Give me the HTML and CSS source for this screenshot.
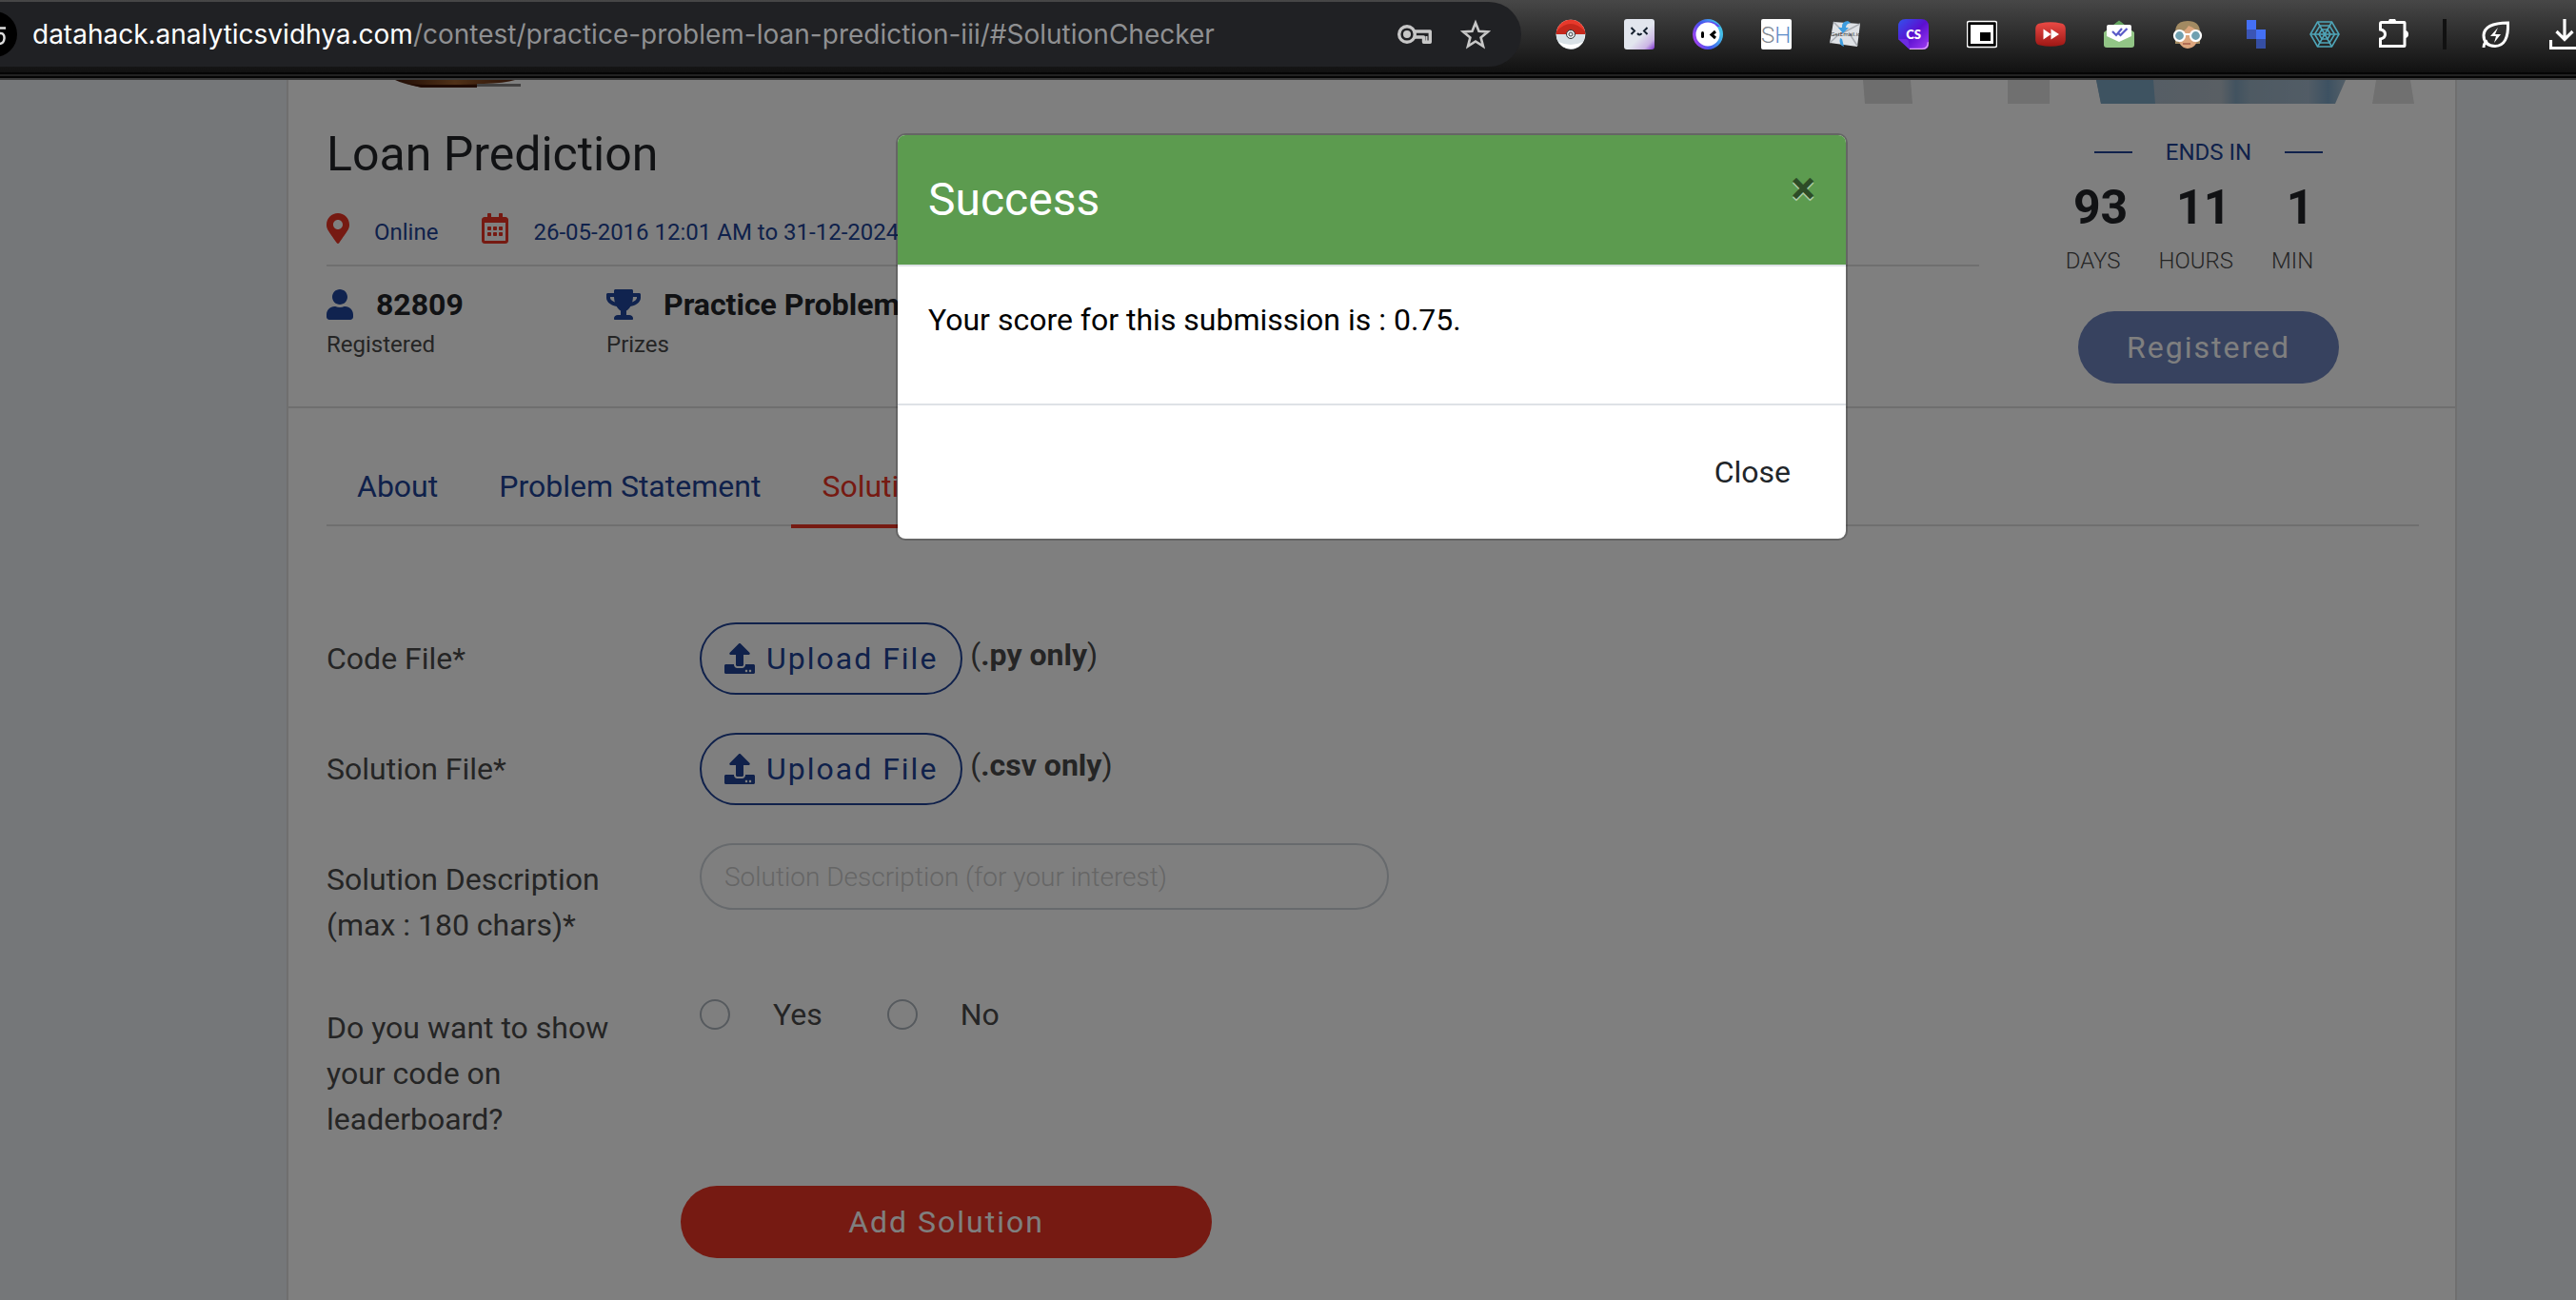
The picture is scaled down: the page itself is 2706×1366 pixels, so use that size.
FILE: index.html
```html
<!DOCTYPE html>
<html lang="en">
<head>
<meta charset="utf-8">
<title>Loan Prediction</title>
<link rel="stylesheet" href="styles.css">
</head>
<body>
<svg class="sprite" aria-hidden="true">
  <symbol id="i-upload" viewBox="0 0 512 512"><path d="M296 384h-80c-13.3 0-24-10.7-24-24V192h-87.7c-17.8 0-26.7-21.5-14.1-34.1L242.3 5.7c7.5-7.5 19.8-7.5 27.3 0l152.2 152.2c12.6 12.6 3.7 34.1-14.1 34.1H320v168c0 13.3-10.7 24-24 24zm216-8v112c0 13.3-10.7 24-24 24H24c-13.3 0-24-10.7-24-24V376c0-13.3 10.7-24 24-24h136v8c0 30.9 25.1 56 56 56h80c30.9 0 56-25.1 56-56v-8h136c13.3 0 24 10.7 24 24zm-124 88c0-11-9-20-20-20s-20 9-20 20 9 20 20 20 20-9 20-20zm64 0c0-11-9-20-20-20s-20 9-20 20 9 20 20 20 20-9 20-20z"/></symbol>
</svg>

<div class="toolbar">
  <div class="omnibox">
    <span class="site-badge"><svg width="18" height="48" viewBox="0 0 18 48"><path d="M-30 24a24 24 0 0 1 48 0a24 24 0 0 1-48 0z" fill="#000"/><path d="M6 17.5H-2M-2 23h3c5 0 5 11-2 11" fill="none" stroke="#ddd" stroke-width="2.500"/></svg></span>
    <span class="url"><b>datahack.analyticsvidhya.com</b>/contest/practice-problem-loan-prediction-iii/#SolutionChecker</span>
    <svg class="omni-icon" width="36" height="20" viewBox="0 0 36 20"><circle cx="10" cy="10" r="8.300" fill="none" stroke="#c7c7c7" stroke-width="3.400"/><circle cx="10" cy="10" r="4" fill="#c7c7c7"/><path d="M17.500 7H34.300V18.300H27.500V13H17.500" fill="none" stroke="#c7c7c7" stroke-width="3.400" stroke-linejoin="round"/><path d="M30.500 12v5" stroke="#c7c7c7" stroke-width="2"/></svg>
    <svg class="omni-icon" width="32" height="32" viewBox="0 0 32 32"><path d="M16 4l3.500 8.800 9.300.6-7.200 6 2.400 9.300L16 23.500l-8 5.200 2.400-9.300-7.200-6 9.300-.6z" fill="none" stroke="#c7c7c7" stroke-width="2.600"/></svg>
  </div>
  <div class="extensions">
    <svg width="32" height="32" viewBox="0 0 32 32"><circle cx="16" cy="16" r="15.300" fill="#fff"/><path d="M.7 16a15.300 15.300 0 0 0 28 9q2-4 2-9z" fill="#d8e1e6"/><path d="M3 24a15.300 15.300 0 0 0 26 0q-13 6-26 0z" fill="#fff"/><path d="M.7 16a15.300 15.300 0 0 1 30.600 0z" fill="#e8392b"/><path d="M1 16V13Q16-3 31 13v3z" fill="#c5281c"/><circle cx="16" cy="16" r="4.500" fill="#e8eef0" stroke="#333" stroke-width="1"/><circle cx="16" cy="16" r="2" fill="none" stroke="#444" stroke-width="1"/></svg>
    <svg width="32" height="32" viewBox="0 0 32 32"><defs><linearGradient id="lav" x1="0" y1="0" x2="1" y2="1"><stop offset=".55" stop-color="#e2e6ee"/><stop offset=".82" stop-color="#cbb5e4"/><stop offset="1" stop-color="#7c2fd0"/></linearGradient></defs><rect width="32" height="32" rx="3" fill="url(#lav)"/><path d="M7.500 9l3.500 3.500L7.500 16M24.500 9L21 12.500l3.500 3.500M14 15q2.500 3 4.500 0" fill="none" stroke="#14202e" stroke-width="2"/></svg>
    <svg width="32" height="32" viewBox="0 0 32 32"><defs><linearGradient id="ring" x1="0" y1="1" x2="1" y2=".6"><stop offset="0" stop-color="#c63cf0"/><stop offset=".5" stop-color="#4353ee"/><stop offset="1" stop-color="#43bfe8"/></linearGradient></defs><circle cx="16" cy="16" r="16" fill="url(#ring)"/><path d="M5 8A16 16 0 0 1 29 8z" fill="#5948ef"/><circle cx="16" cy="16" r="12.500" fill="#fff"/><rect x="9" y="13" width="3" height="7" rx="1.500"/><path d="M24 13l-4 3.500 4 3.500" fill="none" stroke="#000" stroke-width="3"/></svg>
    <svg width="32" height="32" viewBox="0 0 32 32"><rect width="32" height="32" rx="2" fill="#fff"/><text x="0" y="25" class="sh"><tspan fill="#808891">S</tspan><tspan fill="#5b8bc8">H</tspan></text></svg>
    <svg width="32" height="32" viewBox="0 0 32 32"><path d="M4 3l28 2-3 24-29-4z" fill="#dfe2e6"/><path d="M4 3l11 11L32 5M0 25l11-10M29 28l-9-14" fill="none" stroke="#a9adb3" stroke-width="1.500"/><path d="M19 2q-7 1-6 7H9l5 6 6-6h-3q0-4 5-5zM11 20q-2 7 4 9l-2-8z" fill="#3d9de0"/><text x="1" y="18" class="mail-name">GetEmail.io</text></svg>
    <svg width="32" height="32" viewBox="0 0 32 32"><defs><linearGradient id="cs" x1="0" y1="0" x2="1" y2="1"><stop offset="0" stop-color="#3252ec"/><stop offset=".5" stop-color="#5b0fd0"/><stop offset="1" stop-color="#a23ff5"/></linearGradient></defs><path d="M8 0h16q8 0 8 8v18q0 6-6 6H12L0 21V8Q0 0 8 0z" fill="url(#cs)"/><path d="M0 21h8q3 0 3 4l1 7z" fill="#6c2be2"/><path d="M12 31.300h13q6.300 0 6.300-7" fill="none" stroke="#e3a7f5" stroke-width="1.200"/><text x="16" y="21" class="cs">CS</text></svg>
    <svg width="32" height="32" viewBox="0 0 32 32"><rect x=".5" y="2.500" width="31" height="27" rx="2" fill="#000" stroke="#fff" stroke-width="1.500"/><rect x="4" y="6" width="24" height="20" fill="#fff"/><rect x="14" y="14" width="11" height="9"/></svg>
    <svg width="32" height="32" viewBox="0 0 32 32"><defs><linearGradient id="red" x1="0" y1="0" x2="0" y2="1"><stop offset="0" stop-color="#ea4a45"/><stop offset="1" stop-color="#9e1714"/></linearGradient></defs><path d="M5 4.500Q16 2 27 4.500 31.500 5 31.800 10v12q-.3 5-4.800 5.500-11 2.500-22 0Q.5 27 .2 22V10Q.5 5 5 4.500z" fill="url(#red)"/><path d="M8.500 10.500l8 5.500-8 5.500zM16.500 10.500l8.500 5.500-8.500 5.500z" fill="#fff"/></svg>
    <svg width="32" height="32" viewBox="0 0 32 32"><path d="M0 14L16 2l16 12v13q0 3-3 3H3q-3 0-3-3z" fill="#92c586"/><path d="M9 7l7-5.500L23 7z" fill="#64a55f"/><path d="M3 8q0-2 2-2h22q2 0 2 2v10l-13 6L3 18z" fill="#fff"/><path d="M9 13l4 4 6-7M14.500 14.500l3 2.500 7-7" fill="none" stroke="#5a5bc8" stroke-width="2.200"/></svg>
    <svg width="32" height="32" viewBox="0 0 32 32"><path d="M3 26V14Q3 2 16 2t13 12v12z" fill="#a28a62"/><path d="M5 15q8-1 12-8 9 3 10 9 0 14-11 15Q6 30 5 15z" fill="#dba57d"/><path d="M11 26h8" stroke="#a55d4a" stroke-width="1.500"/><circle cx="7.500" cy="17.500" r="5.500" fill="#6fa0b0" stroke="#fff" stroke-width="2.200"/><circle cx="24.500" cy="17.500" r="5.500" fill="#6fa0b0" stroke="#fff" stroke-width="2.200"/><path d="M12 16h8" stroke="#fff" stroke-width="2"/></svg>
    <svg width="32" height="32" viewBox="0 0 32 32"><path d="M6 1h10v10H6z" fill="#4470f5"/><path d="M16 11h10v10H16z" fill="#4470f5"/><path d="M6 11h10v10H6z" fill="#3b55b5"/><path d="M16 21h10v10H16z" fill="#354ea3"/></svg>
    <svg width="32" height="32" viewBox="0 0 32 32"><g fill="none" stroke="#4fa5b8" stroke-width="1.600"><path d="M8.500 3h15L31 16l-7.500 13h-15L1 16z"/><path d="M11 7h10l5.500 9L21 25H11l-5.500-9z"/><path d="M13 11h6l3 5-3 5h-6l-3-5z"/><path d="M8.500 3l15 26M23.500 3l-15 26M1 16h30"/></g></svg>
    <svg width="32" height="32" viewBox="0 0 32 32"><path d="M4 3.500h23.500q.5 0 .5.500v24q0 .5-.5.500H2.500V21q5-1 5-5t-5-5V5q0-1.500 1.500-1.500z" fill="none" stroke="#fff" stroke-width="3"/><path d="M11 3a4 4 0 0 1 8 0zM28 12a4 4 0 0 1 0 8z" fill="#fff"/></svg>
    <span class="divider"></span>
    <svg width="32" height="32" viewBox="0 0 32 32"><path d="M28.500 4Q29.500 28 15 28.500 3 28 3 17 4 4 28.500 4zM3 30q0-5 4-7" fill="none" stroke="#fff" stroke-width="3"/><path d="M18 9l-8 9h6l-2 7 7-9h-6z" fill="#fff"/></svg>
    <svg width="32" height="32" viewBox="0 0 32 32"><path d="M16 0v20M7.500 13l8.500 8.500L24.500 13M1.500 22v8.500h29V22" fill="none" stroke="#fff" stroke-width="3.200"/></svg>
  </div>
</div>

<div class="page">
  <main class="card">
    <div class="banner">
      <svg width="132" height="26" viewBox="0 0 132 26"><defs><linearGradient id="wood" x1="0" x2="1"><stop offset="0" stop-color="#40180a"/><stop offset=".5" stop-color="#a0622f"/><stop offset="1" stop-color="#5a2610"/></linearGradient></defs><path d="M0 0h126q-12 4-40 4v4H28Q8 4 0 0z" fill="url(#wood)"/><path d="M12 4q16 2 100 0L86 5v3H28z" fill="#401607"/><path d="M86 7h46V4H86z" fill="#858282"/></svg>
      <svg width="584" height="26" viewBox="0 0 584 26"><defs><linearGradient id="sky" x1="0" x2="1"><stop offset="0" stop-color="#a4b9cc"/><stop offset=".5" stop-color="#b3bec8"/><stop offset=".56" stop-color="#84a6c0"/><stop offset=".62" stop-color="#9db4c6"/><stop offset=".85" stop-color="#a4b9cc"/><stop offset=".93" stop-color="#7ba3c4"/><stop offset="1" stop-color="#a9bfd0"/></linearGradient></defs><path d="M2 0h50l2 25H4z" fill="#dcdcdc"/><path d="M154 0h44v25h-44zM541 0h36l4 25h-44z" fill="#e0e0e0"/><path d="M247 0h262l-11 25H252z" fill="url(#sky)"/><path d="M247 0h60l2 25h-57z" fill="#7da6c2"/></svg>
    </div>
    <header class="contest">
      <div class="summary">
        <h1>Loan Prediction</h1>
        <div class="meta">
          <span class="meta-item"><svg class="red" width="24" height="32" viewBox="0 0 384 512"><path d="M172.268 501.670C26.970 291.031 0 269.413 0 192 0 85.961 85.961 0 192 0s192 85.961 192 192c0 77.413-26.970 99.031-172.268 309.670-9.535 13.774-29.930 13.773-39.464 0zM192 272c44.183 0 80-35.817 80-80s-35.817-80-80-80-80 35.817-80 80 35.817 80 80 80z"/></svg>Online</span>
          <span class="meta-item"><svg class="red" width="28" height="32" viewBox="0 0 448 512"><path d="M148 288h-40c-6.600 0-12-5.400-12-12v-40c0-6.600 5.400-12 12-12h40c6.600 0 12 5.400 12 12v40c0 6.600-5.400 12-12 12zm108-12v-40c0-6.600-5.400-12-12-12h-40c-6.600 0-12 5.400-12 12v40c0 6.600 5.400 12 12 12h40c6.600 0 12-5.400 12-12zm96 0v-40c0-6.600-5.400-12-12-12h-40c-6.600 0-12 5.400-12 12v40c0 6.600 5.400 12 12 12h40c6.600 0 12-5.400 12-12zm-96 96v-40c0-6.600-5.400-12-12-12h-40c-6.600 0-12 5.400-12 12v40c0 6.600 5.400 12 12 12h40c6.600 0 12-5.400 12-12zm-96 0v-40c0-6.600-5.400-12-12-12h-40c-6.600 0-12 5.400-12 12v40c0 6.600 5.400 12 12 12h40c6.600 0 12-5.400 12-12zm192 0v-40c0-6.600-5.400-12-12-12h-40c-6.600 0-12 5.400-12 12v40c0 6.600 5.400 12 12 12h40c6.600 0 12-5.400 12-12zm96-260v352c0 26.500-21.500 48-48 48H48c-26.500 0-48-21.500-48-48V112c0-26.500 21.500-48 48-48h48V12c0-6.600 5.400-12 12-12h40c6.600 0 12 5.400 12 12v52h128V12c0-6.600 5.400-12 12-12h40c6.600 0 12 5.400 12 12v52h48c26.500 0 48 21.500 48 48zm-48 346V160H48v298c0 3.300 2.700 6 6 6h340c3.300 0 6-2.700 6-6z"/></svg>26-05-2016 12:01 AM to 31-12-2024</span>
        </div>
        <div class="stats">
          <div class="stat">
            <strong><svg width="28" height="32" viewBox="0 0 448 512"><path d="M224 256c70.700 0 128-57.300 128-128S294.700 0 224 0 96 57.300 96 128s57.300 128 128 128zm89.600 32h-16.700c-22.200 10.200-46.900 16-72.900 16s-50.600-5.800-72.900-16h-16.700C60.200 288 0 348.200 0 422.400V464c0 26.500 21.500 48 48 48h352c26.500 0 48-21.500 48-48v-41.600c0-74.200-60.200-134.400-134.400-134.400z"/></svg>82809</strong>
            <span>Registered</span>
          </div>
          <div class="stat">
            <strong><svg width="36" height="32" viewBox="0 0 576 512"><path d="M552 64H448V24c0-13.300-10.700-24-24-24H152c-13.300 0-24 10.700-24 24v40H24C10.700 64 0 74.700 0 88v56c0 35.700 22.500 72.400 61.900 100.700 31.500 22.700 69.800 37.100 110 41.700C203.300 338.500 240 360 240 360v72h-48c-35.300 0-64 20.700-64 56v12c0 6.600 5.400 12 12 12h296c6.600 0 12-5.400 12-12v-12c0-35.300-28.700-56-64-56h-48v-72s36.700-21.500 68.100-73.600c40.300-4.600 78.600-19 110-41.700 39.300-28.300 61.900-65 61.900-100.700V88c0-13.300-10.700-24-24-24zM99.300 192.800C74.900 175.200 64 155.600 64 144v-16h64.200c1 32.600 5.800 61.200 12.800 86.200-15.100-5.200-29.200-12.400-41.700-21.400zM512 144c0 16.100-17.700 36.100-35.300 48.800-12.500 9-26.700 16.200-41.800 21.400 7-25 11.800-53.600 12.800-86.200H512v16z"/></svg>Practice Problem</strong>
            <span>Prizes</span>
          </div>
        </div>
      </div>
      <aside class="countdown">
        <div class="ends">ENDS IN</div>
        <div class="units">
          <div class="unit"><b>93</b><span>DAYS</span></div>
          <div class="unit"><b>11</b><span>HOURS</span></div>
          <div class="unit"><b>1</b><span>MIN</span></div>
        </div>
        <button class="pill registered" type="button">Registered</button>
      </aside>
    </header>

    <nav class="tabs">
      <a href="#About">About</a>
      <a href="#ProblemStatement">Problem Statement</a>
      <a href="#SolutionChecker" class="active">Solution Checker</a>
    </nav>

    <form class="solution">
      <div class="row">
        <label for="code-file">Code File*</label>
        <button id="code-file" class="pill upload" type="button"><svg width="32" height="32"><use href="#i-upload"/></svg>Upload File</button>
        <span class="hint">(<b>.py only</b>)</span>
      </div>
      <div class="row">
        <label for="solution-file">Solution File*</label>
        <button id="solution-file" class="pill upload" type="button"><svg width="32" height="32"><use href="#i-upload"/></svg>Upload File</button>
        <span class="hint">(<b>.csv only</b>)</span>
      </div>
      <div class="row">
        <label for="description">Solution Description (max : 180 chars)*</label>
        <input id="description" class="text" type="text" placeholder="Solution Description (for your interest)">
      </div>
      <div class="row" role="radiogroup" aria-labelledby="show-code">
        <span class="label" id="show-code">Do you want to show your code on leaderboard?</span>
        <label class="choice"><input type="radio" name="show">Yes</label>
        <label class="choice"><input type="radio" name="show">No</label>
      </div>
      <button class="pill submit" type="submit">Add Solution</button>
    </form>
  </main>

  <div class="backdrop">
    <section class="modal" role="dialog" aria-labelledby="modal-title">
      <header>
        <h2 id="modal-title">Success</h2>
        <button class="dismiss" type="button" aria-label="Dismiss">×</button>
      </header>
      <p>Your score for this submission is : 0.75.</p>
      <footer><button class="close" type="button">Close</button></footer>
    </section>
  </div>
</div>
</body>
</html>
```
FILE: styles.css
```css
:root {
  --blue: #20479f;
  --blue-dark: #204396;
  --red: #ed3424;
  --ink: #222529;
  --text: #4a4a4a;
  --line: #dfdfdf;
}
* { box-sizing: border-box; }
body {
  margin: 0;
  min-height: 100vh;
  display: flex;
  flex-direction: column;
  overflow: hidden;
  font: 32px/48px Roboto, "Liberation Sans", sans-serif;
  color: var(--text);
}
h1, h2, p { margin: 0; font-weight: 400; }
button { font: inherit; cursor: pointer; }
a { text-decoration: none; }
svg { flex: none; display: block; }
.sprite { position: absolute; width: 0; height: 0; }

/* Browser toolbar */
.toolbar {
  height: 84px;
  flex: none;
  display: flex;
  align-items: flex-start;
  gap: 36px;
  padding-top: 2px;
  margin-right: -4px;
  background:
    linear-gradient(#050505 2px, #222 2px 4px, #050505 4px 6px, #383838 6px) bottom / 100% 8px no-repeat,
    linear-gradient(#474747, #111 76px);
}
.omnibox {
  flex: 1;
  height: 68px;
  display: flex;
  align-items: center;
  padding-right: 32px;
  background: #202124;
  border-radius: 0 34px 34px 0;
}
.url { flex: 1; margin-left: 16px; font-family: Inter, Roboto, sans-serif; font-size: 28px; color: #8f9092; white-space: nowrap; }
.url b { font-weight: 400; color: #fff; }
.omni-icon + .omni-icon { margin-left: 30px; }
.extensions { height: 68px; display: flex; align-items: center; gap: 40px; }
.divider { width: 4px; height: 32px; margin: 0 -4px; background: #111; }
.sh { font: 300 24px Roboto, sans-serif; }
.mail-name { font: 6px "Open Sans", sans-serif; fill: #222; }
.cs { font: 800 13px Lato, sans-serif; fill: #fff; text-anchor: middle; }

/* Page */
.page {
  position: relative;
  flex: 1;
  display: flex;
  justify-content: center;
  padding-left: 176px;
  background: #ebeef2;
}
.card {
  width: 2280px;
  max-width: 100%;
  background: #fff;
  border: solid var(--line);
  border-width: 0 2px;
}
.banner { display: flex; justify-content: space-between; padding: 0 40px 0 112px; }

.contest {
  display: flex;
  gap: 20px;
  padding: 24px 38px 24px 40px;
  border-bottom: 2px solid var(--line);
}
.summary { flex: 1; }
h1 { font-size: 50px; line-height: 56px; color: var(--ink); }
.meta {
  display: flex;
  gap: 46px;
  padding: 34px 0 14px;
  border-bottom: 2px solid var(--line);
  font-size: 24px;
  line-height: 40px;
  color: var(--blue-dark);
}
.meta-item { display: flex; gap: 26px; }
.red { fill: var(--red); }
.stats { display: flex; padding-top: 24px; fill: var(--blue); }
.stat { min-width: 294px; font-size: 24px; line-height: 32px; }
.stat strong { display: flex; gap: 24px; margin-bottom: 10px; font-size: 32px; font-weight: 700; color: var(--ink); }

.countdown { width: 442px; padding-top: 10px; display: flex; flex-direction: column; align-items: center; font-size: 24px; line-height: 32px; }
.ends { display: flex; align-items: center; gap: 35px; color: var(--blue-dark); }
.ends::before, .ends::after { content: ""; width: 40px; height: 2px; background: currentColor; }
.units { display: flex; padding: 14px 0 37px; }
.unit { display: flex; flex-direction: column; align-items: center; gap: 12px; margin-right: 40px; font-weight: 300; }
.unit b { padding-left: 8px; margin-right: -8px; font-size: 50px; line-height: 56px; font-weight: 700; color: var(--ink); }

.pill {
  height: 76px;
  border: 0;
  border-radius: 38px;
  padding: 0 51px;
  font-size: 32px;
  letter-spacing: 2px;
  color: #fff;
  display: flex;
  align-items: center;
  justify-content: center;
}
.registered { background: #6f85bf; }

.tabs { display: flex; margin: 42px 38px 0 40px; border-bottom: 2px solid var(--line); }
.tabs a { padding: 16px 32px; margin-bottom: -4px; border-bottom: 4px solid transparent; color: var(--blue-dark); }
.tabs .active { color: var(--red); border-color: var(--red); }

.solution { padding: 101px 38px 44px 40px; display: flex; flex-direction: column; gap: 40px; align-items: flex-start; }
.row { display: flex; align-items: flex-start; }
.row > :first-child { width: 392px; padding: 14px 36px 6px 0; }
.upload { padding: 0 24px; gap: 12px; border: 2px solid var(--blue-dark); background: none; color: var(--blue-dark); fill: var(--blue-dark); }
.hint { padding: 10px 0 0 8px; }
.text {
  width: 724px;
  height: 70px;
  padding: 0 24px;
  border: 2px solid #ced4da;
  border-radius: 35px;
  background: none;
  font: 300 28px Roboto, sans-serif;
}
.text::placeholder { color: #ccc; opacity: 1; }
.choice { display: flex; align-items: center; gap: 45px; margin-right: 68px; }
.choice input { appearance: none; width: 32px; height: 32px; margin: 0; border: 2px solid #adb5bd; border-radius: 50%; }
.submit { width: 558px; margin-left: 372px; background: var(--red); }

/* Result dialog */
.backdrop {
  position: absolute;
  inset: 0;
  display: flex;
  justify-content: center;
  align-items: flex-start;
  padding: 56px 0 0 176px;
  background: rgba(0, 0, 0, .5);
}
.modal {
  width: 1000px;
  background: #fff;
  background-clip: padding-box;
  border: 2px solid rgba(0, 0, 0, .2);
  border-radius: 10px;
  color: #000;
}
.modal header {
  display: flex;
  justify-content: space-between;
  align-items: flex-start;
  padding: 32px;
  background: #5c9b4f;
  border-bottom: 2px solid #dee2e6;
  border-radius: 8px 8px 0 0;
}
.modal h2 { font-size: 48px; line-height: 72px; color: #fff; }
.dismiss {
  padding: 0;
  border: 0;
  background: none;
  color: #000;
  opacity: .5;
  font-size: 48px;
  line-height: 48px;
  font-weight: 700;
  text-shadow: 0 2px 0 #fff;
}
.modal p { padding: 32px 32px 64px; }
.modal footer { display: flex; justify-content: flex-end; padding: 32px; border-top: 2px solid #dee2e6; }
.close { height: 76px; padding: 0 26px; border: 0; background: none; color: #212529; }
```
